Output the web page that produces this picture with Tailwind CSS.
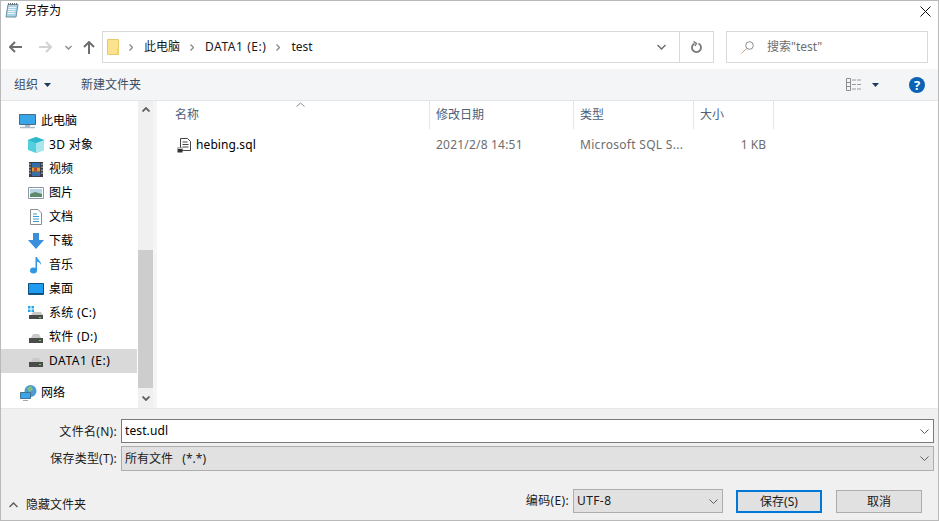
<!DOCTYPE html>
<html lang="zh-CN">

<head>
    <meta charset="UTF-8">
    <title>另存为</title>
    <script src="https://cdn.jsdelivr.net/npm/@tailwindcss/browser@4"></script>
</head>

<body class="bg-white overflow-hidden">

    <div class="w-[939px] h-[521px] flex flex-col border border-[#b9b9b9] bg-white text-[12px] leading-[16px] text-[#1a1a1a] font-['Noto_Sans','Noto_Sans_CJK_SC',sans-serif]">

        <!-- 标题栏 -->
        <div class="h-[30px] shrink-0 flex items-start pt-[1px] pl-[4px] pr-[7px]">
            <svg class="w-[14px] h-[15px] mt-[1px]" viewBox="0 0 14 15">
                <path d="M3 1.500h10l-2 12.500H1z" fill="#a9d3e6" stroke="#6a8fa3" stroke-width="1" />
                <path d="M3.500 4.500h7.500M3 6.500h7.500M3 8.500h7M2.500 10.500h7" stroke="#e8f4fa" stroke-width="1" />
                <path d="M3 1h10" stroke="#707070" stroke-width="2" stroke-dasharray="1 1" />
            </svg>
            <span class="ml-[6px] mt-[1px] text-[#000]">另存为</span>
            <svg class="ml-auto mt-[4px] w-[11px] h-[11px]" viewBox="0 0 11 11">
                <path d="M.5.500l10 10M10.500.5l-10 10" stroke="#111" stroke-width="1" fill="none" />
            </svg>
        </div>

        <!-- 地址栏 -->
        <div class="h-[32px] shrink-0 flex items-center">
            <div class="w-[101px] flex items-center pl-[8px]">
                <svg class="w-[13px] h-[12px]" viewBox="0 0 13 12">
                    <path d="M6 1L1 6l5 5M1.500 6H13" stroke="#6e6e6e" stroke-width="2" fill="none" />
                </svg>
                <svg class="w-[13px] h-[12px] ml-[17px]" viewBox="0 0 13 12">
                    <path d="M7 1l5 5-5 5M11.500 6H0" stroke="#d2d2d2" stroke-width="2" fill="none" />
                </svg>
                <svg class="w-[7px] h-[5px] ml-[13px]" viewBox="0 0 7 5">
                    <path d="M.5 1l3 3 3-3" stroke="#8a8a8a" stroke-width="1.400" fill="none" />
                </svg>
                <svg class="w-[12px] h-[13px] ml-[11px]" viewBox="0 0 12 13">
                    <path d="M1 6l5-5 5 5M6 1.500V13" stroke="#6e6e6e" stroke-width="2" fill="none" />
                </svg>
            </div>
            <div class="w-[612px] h-[32px] flex items-center border border-[#d9d9d9]">
                <svg class="w-[12px] h-[16px] ml-[4px]" viewBox="0 0 12 16">
                    <path d="M.5.500h11v15H.5z" fill="#fbe28f" stroke="#e8c867" />
                    <path d="M10 9.500h1.500V15H10z" fill="#f7d36b" />
                </svg>
                <svg class="w-[4px] h-[7px] ml-[10px]" viewBox="0 0 4 7">
                    <path d="M.5.500l3 3-3 3" stroke="#8a8a8a" stroke-width="1.400" fill="none" />
                </svg>
                <span class="ml-[11px]">此电脑</span>
                <svg class="w-[4px] h-[7px] ml-[10px]" viewBox="0 0 4 7">
                    <path d="M.5.500l3 3-3 3" stroke="#8a8a8a" stroke-width="1.400" fill="none" />
                </svg>
                <span class="ml-[11px] tracking-[0.55px]">DATA1 (E:)</span>
                <svg class="w-[4px] h-[7px] ml-[10px]" viewBox="0 0 4 7">
                    <path d="M.5.500l3 3-3 3" stroke="#8a8a8a" stroke-width="1.400" fill="none" />
                </svg>
                <span class="ml-[11px]">test</span>
                <div class="ml-auto w-[22px] flex justify-start">
                    <svg class="w-[9px] h-[6px]" viewBox="0 0 9 6">
                        <path d="M.5 1l4 4 4-4" stroke="#707070" stroke-width="1.500" fill="none" />
                    </svg>
                </div>
                <div class="w-[34px] h-full border-l border-[#d9d9d9] flex items-center justify-center">
                    <svg class="w-[11px] h-[12px]" viewBox="0 0 11 12">
                        <path d="M3.500 2.500a4.500 4.500 0 1 0 4 0" stroke="#7a7a7a" stroke-width="1.800" fill="none" />
                        <path d="M2.500 .5l3 2-1.500 2.500" stroke="#7a7a7a" stroke-width="1.400" fill="none" />
                    </svg>
                </div>
            </div>
            <div class="w-[202px] h-[32px] ml-[12px] flex items-center border border-[#d9d9d9] pl-[14px] text-[#6d6d6d]">
                <svg class="w-[13px] h-[13px]" viewBox="0 0 13 13">
                    <circle cx="8.500" cy="4.500" r="3.800" stroke="#8c8c8c" fill="none" />
                    <path d="M5.500 7.500L.5 12.500" stroke="#c9a58c" stroke-width="1" />
                </svg>
                <span class="ml-[13px]">搜索"test"</span>
            </div>
        </div>

        <div class="h-[6px] shrink-0"></div>

        <!-- 工具栏 -->
        <div class="h-[32px] shrink-0 flex items-center bg-[#f3f5f7] border-b border-[#e5e5e5] text-[#3c4c5c]">
            <span class="ml-[13px]">组织</span>
            <svg class="w-[7px] h-[4px] ml-[6px]" viewBox="0 0 7 4">
                <path d="M0 0h7L3.500 4z" fill="#1e3a5f" />
            </svg>
            <span class="ml-[30px]">新建文件夹</span>
            <svg class="w-[16px] h-[13px] ml-auto" viewBox="0 0 16 13">
                <path d="M.5.500h4v12h-4zM.5 4.500h4M.5 8.500h4" stroke="#8d8d8d" fill="none" />
                <path d="M6 2h4M11 2h4M6 6.500h4M11 6.500h4M6 11h4M11 11h4" stroke="#9a9a9a" />
            </svg>
            <svg class="w-[7px] h-[4px] ml-[10px]" viewBox="0 0 7 4">
                <path d="M0 0h7L3.500 4z" fill="#1e3a5f" />
            </svg>
            <div class="w-[16px] h-[16px] ml-[30px] mr-[13px] rounded-full bg-[#0a62b4] flex items-center justify-center text-white font-bold text-[13px]">?</div>
        </div>

        <!-- 主体 -->
        <div class="h-[307px] shrink-0 flex">
            <!-- 导航树 -->
            <div class="w-[137px] shrink-0 flex flex-col pt-[8px] text-[#000]">
                <div class="h-[24px] flex items-center pl-[18px]">
                    <svg class="w-[17px] h-[15px]" viewBox="0 0 17 15">
                        <path d="M.5.500h16v10H.5z" fill="#3aa6ea" stroke="#4a6a80" />
                        <path d="M6 11h5v2H6z" fill="#a9bcc8" />
                        <path d="M1 13.500h15" stroke="#a9bcc8" stroke-width="1.500" />
                    </svg>
                    <span class="ml-[5px]">此电脑</span>
                </div>
                <div class="h-[24px] flex items-center pl-[27px]">
                    <svg class="w-[16px] h-[16px]" viewBox="0 0 16 16">
                        <path d="M8 0l8 3v10l-8 3-8-3V3z" fill="#54d0dc" />
                        <path d="M8 6l8-3v10l-8 3z" fill="#a6e6ee" />
                        <path d="M0 3l8 3 8-3-8-3z" fill="#2db8cc" />
                    </svg>
                    <span class="ml-[5px] tracking-[0.3px]">3D 对象</span>
                </div>
                <div class="h-[24px] flex items-center pl-[28px]">
                    <svg class="w-[14px] h-[15px]" viewBox="0 0 14 15">
                        <path d="M0 0h14v15H0z" fill="#3a3f4a" />
                        <path d="M3 1h8v4H3z" fill="#2f6fb0" />
                        <path d="M3 5.500h8v4H3z" fill="#d8a23a" />
                        <path d="M3 10h8v4H3z" fill="#3c6fa8" />
                        <path d="M5 6h3v3H5z" fill="#c0452f" />
                        <path d="M1 1.500v12M13 1.500v12" stroke="#d8d8d8" stroke-dasharray="1.500 1.500" />
                    </svg>
                    <span class="ml-[6px]">视频</span>
                </div>
                <div class="h-[24px] flex items-center pl-[27px]">
                    <svg class="w-[16px] h-[12px]" viewBox="0 0 16 12">
                        <path d="M.5.500h15v11H.5z" fill="#fff" stroke="#8d98a0" />
                        <path d="M2 2h12v5H2z" fill="#b8d4e4" />
                        <path d="M2 7l5-2 7 2v3H2z" fill="#5d8a6a" />
                    </svg>
                    <span class="ml-[5px]">图片</span>
                </div>
                <div class="h-[24px] flex items-center pl-[29px]">
                    <svg class="w-[12px] h-[16px]" viewBox="0 0 12 16">
                        <path d="M.5.500H8L11.500 4v11.500H.5z" fill="#fff" stroke="#8d8d8d" />
                        <path d="M3 5h4M3 7.500h6M3 10h6M3 12.500h6" stroke="#3a9ad9" />
                    </svg>
                    <span class="ml-[7px]">文档</span>
                </div>
                <div class="h-[24px] flex items-center pl-[27px]">
                    <svg class="w-[16px] h-[16px]" viewBox="0 0 16 16">
                        <path d="M5 0h6v7h5l-8 9-8-9h5z" fill="#3a8fdc" />
                    </svg>
                    <span class="ml-[5px]">下载</span>
                </div>
                <div class="h-[24px] flex items-center pl-[29px]">
                    <svg class="w-[12px] h-[17px]" viewBox="0 0 12 17">
                        <ellipse cx="3.500" cy="13.500" rx="3.500" ry="3" fill="#2f97e6" />
                        <path d="M5.500 13V0h1.500c.5 3 4.500 4 4 8-1-2.500-2.500-3-4-3.500V13z" fill="#2f97e6" />
                    </svg>
                    <span class="ml-[7px]">音乐</span>
                </div>
                <div class="h-[24px] flex items-center pl-[27px]">
                    <svg class="w-[16px] h-[12px]" viewBox="0 0 16 12">
                        <path d="M.5.500h15v11H.5z" fill="#1f9bf0" stroke="#14507f" />
                        <path d="M1 10h14v1.500H1z" fill="#14507f" />
                    </svg>
                    <span class="ml-[5px]">桌面</span>
                </div>
                <div class="h-[24px] flex items-center pl-[27px]">
                    <svg class="w-[16px] h-[14px]" viewBox="0 0 16 14">
                        <path d="M0 0h2.500v2.500H0zM3.500 0h2.500v2.500H3.500zM0 3.500h2.500v2.500H0zM3.500 3.500h2.500v2.500H3.500z" fill="#20a8ea" />
                        <path d="M3 9l2-3h8l2 3z" fill="#c9c9c9" />
                        <path d="M1 9h14v4H1z" fill="#4b4b4b" />
                        <path d="M11 11h2v1h-2z" fill="#6fdc6f" />
                    </svg>
                    <span class="ml-[5px] tracking-[0.3px]">系统 (C:)</span>
                </div>
                <div class="h-[24px] flex items-center pl-[27px]">
                    <svg class="w-[16px] h-[9px] mt-[3px]" viewBox="0 0 16 9">
                        <path d="M3 4l2-4h6l2 4z" fill="#c9c9c9" />
                        <path d="M1 4h14v5H1z" fill="#4b4b4b" />
                        <path d="M11 6h2v1h-2z" fill="#6fdc6f" />
                    </svg>
                    <span class="ml-[5px] tracking-[0.3px]">软件 (D:)</span>
                </div>
                <div class="h-[24px] mr-[1px] flex items-center pl-[27px] bg-[#d9d9d9]">
                    <svg class="w-[16px] h-[9px] mt-[3px]" viewBox="0 0 16 9">
                        <path d="M3 4l2-4h6l2 4z" fill="#c9c9c9" />
                        <path d="M1 4h14v5H1z" fill="#4b4b4b" />
                        <path d="M11 6h2v1h-2z" fill="#6fdc6f" />
                    </svg>
                    <span class="ml-[5px] tracking-[0.55px]">DATA1 (E:)</span>
                </div>
                <div class="h-[8px]"></div>
                <div class="h-[24px] flex items-center pl-[19px]">
                    <svg class="w-[17px] h-[16px]" viewBox="0 0 17 16">
                        <circle cx="10.500" cy="6" r="6" fill="#4e9ad6" />
                        <path d="M7 3l4-2 2 4-4 2z" fill="#7fc07a" />
                        <path d="M.5 7.500h10v6H.5z" fill="#3aa6ea" stroke="#47708e" />
                        <path d="M3 15.500h5" stroke="#9aa9b4" />
                    </svg>
                    <span class="ml-[4px]">网络</span>
                </div>
            </div>

            <!-- 滚动条 -->
            <div class="w-[15px] shrink-0 flex flex-col bg-[#f0f0f0]">
                <div class="h-[17px] flex items-center justify-center">
                    <svg class="w-[8px] h-[5px]" viewBox="0 0 8 5">
                        <path d="M.5 4.500L4 1l3.500 3.500" stroke="#606060" stroke-width="1.800" fill="none" />
                    </svg>
                </div>
                <div class="h-[132px]"></div>
                <div class="h-[138px] bg-[#cdcdcd]"></div>
                <div class="h-[20px] flex items-center justify-center">
                    <svg class="w-[8px] h-[5px]" viewBox="0 0 8 5">
                        <path d="M.5.500L4 4l3.500-3.500" stroke="#606060" stroke-width="1.800" fill="none" />
                    </svg>
                </div>
            </div>
            <div class="w-[4px] shrink-0 bg-[#f5f5f5]"></div>

            <!-- 文件列表 -->
            <div class="flex-1 flex flex-col">
                <div class="h-[28px] flex relative text-[#4c607a]">
                    <svg class="absolute left-[139px] top-[1px] w-[9px] h-[5px]" viewBox="0 0 9 5">
                        <path d="M.5 4.500l4-3.500 4 3.500" stroke="#8a8a8a" fill="none" />
                    </svg>
                    <div class="w-[273px] pl-[18px] flex items-center border-r border-[#e5e5e5]">名称</div>
                    <div class="w-[144px] pl-[6px] flex items-center border-r border-[#e5e5e5]">修改日期</div>
                    <div class="w-[120px] pl-[6px] flex items-center border-r border-[#e5e5e5]">类型</div>
                    <div class="w-[80px] pl-[6px] flex items-center border-r border-[#e5e5e5]">大小</div>
                </div>
                <div class="h-[24px] mt-[4px] flex items-center">
                    <div class="w-[272px] pl-[20px] flex items-center text-[#000]">
                        <svg class="w-[14px] h-[15px] shrink-0" viewBox="0 0 14 15">
                            <path d="M3.500.500h7l3 3v9h-10z" fill="#fff" stroke="#444" />
                            <path d="M5.500 4h5M5.500 6.500h6M5.500 9h6" stroke="#444" />
                            <path d="M.5 9.500h5v5h-5z" fill="#333" />
                            <path d="M.5 9.500h5v1.500h-5z" fill="#ccc" />
                        </svg>
                        <span class="ml-[5px] tracking-[0.1px]">hebing.sql</span>
                    </div>
                    <div class="w-[144px] pl-[7px] text-[#6d6d6d] tracking-[0.2px]">2021/2/8 14:51</div>
                    <div class="w-[120px] pl-[7px] text-[#6d6d6d] whitespace-nowrap tracking-[0.3px]">Microsoft SQL S...</div>
                    <div class="w-[73px] text-right text-[#6d6d6d]">1 KB</div>
                </div>
            </div>
        </div>

        <!-- 底部 -->
        <div class="flex-1 flex flex-col bg-[#f0f0f0]">
            <div class="h-[11px] shrink-0 border-t border-[#e8e8e8]"></div>
            <div class="h-[24px] shrink-0 flex items-center">
                <div class="w-[116px] mt-[1px] text-right tracking-[0.3px]">文件名(N):</div>
                <div class="ml-[4px] w-[813px] h-full flex items-center bg-white border border-[#7a7a7a] pl-[3px] text-[#000]">
                    <span class="tracking-[0.1px]">test.udl</span>
                    <svg class="ml-auto mr-[4px] w-[9px] h-[5px]" viewBox="0 0 9 5">
                        <path d="M.5.500l4 4 4-4" stroke="#606060" fill="none" />
                    </svg>
                </div>
            </div>
            <div class="h-[25px] shrink-0 mt-[3px] flex items-center">
                <div class="w-[116px] text-right tracking-[0.2px]">保存类型(T):</div>
                <div class="ml-[4px] w-[813px] h-full flex items-center bg-[#e1e1e1] border border-[#adadad] pl-[3px]">
                    所有文件&nbsp;&nbsp;&nbsp;(*.*)
                    <svg class="ml-auto mr-[4px] w-[9px] h-[5px]" viewBox="0 0 9 5">
                        <path d="M.5.500l4 4 4-4" stroke="#606060" fill="none" />
                    </svg>
                </div>
            </div>
            <div class="mt-[18px] h-[24px] shrink-0 flex items-center">
                <svg class="ml-[8px] mt-[8px] w-[9px] h-[6px]" viewBox="0 0 9 6">
                    <path d="M.5 5l4-4 4 4" stroke="#606060" stroke-width="1.500" fill="none" />
                </svg>
                <span class="ml-[8px] mt-[8px]">隐藏文件夹</span>
                <span class="ml-auto tracking-[0.35px]">编码(E):</span>
                <div class="ml-[4px] w-[150px] h-[24px] flex items-center bg-[#e1e1e1] border border-[#adadad] pl-[3px]">
                    <span class="tracking-[0.4px]">UTF-8</span>
                    <svg class="ml-auto mr-[4px] w-[9px] h-[5px]" viewBox="0 0 9 5">
                        <path d="M.5.500l4 4 4-4" stroke="#606060" fill="none" />
                    </svg>
                </div>
                <button class="ml-[13px] mt-[1px] w-[86px] h-[23px] bg-[#e1e1e1] border-2 border-[#0078d7]">保存(S)</button>
                <button class="ml-[14px] mt-[1px] mr-[16px] w-[86px] h-[23px] bg-[#e1e1e1] border border-[#adadad]">取消</button>
            </div>
        </div>
    </div>

</body>

</html>
